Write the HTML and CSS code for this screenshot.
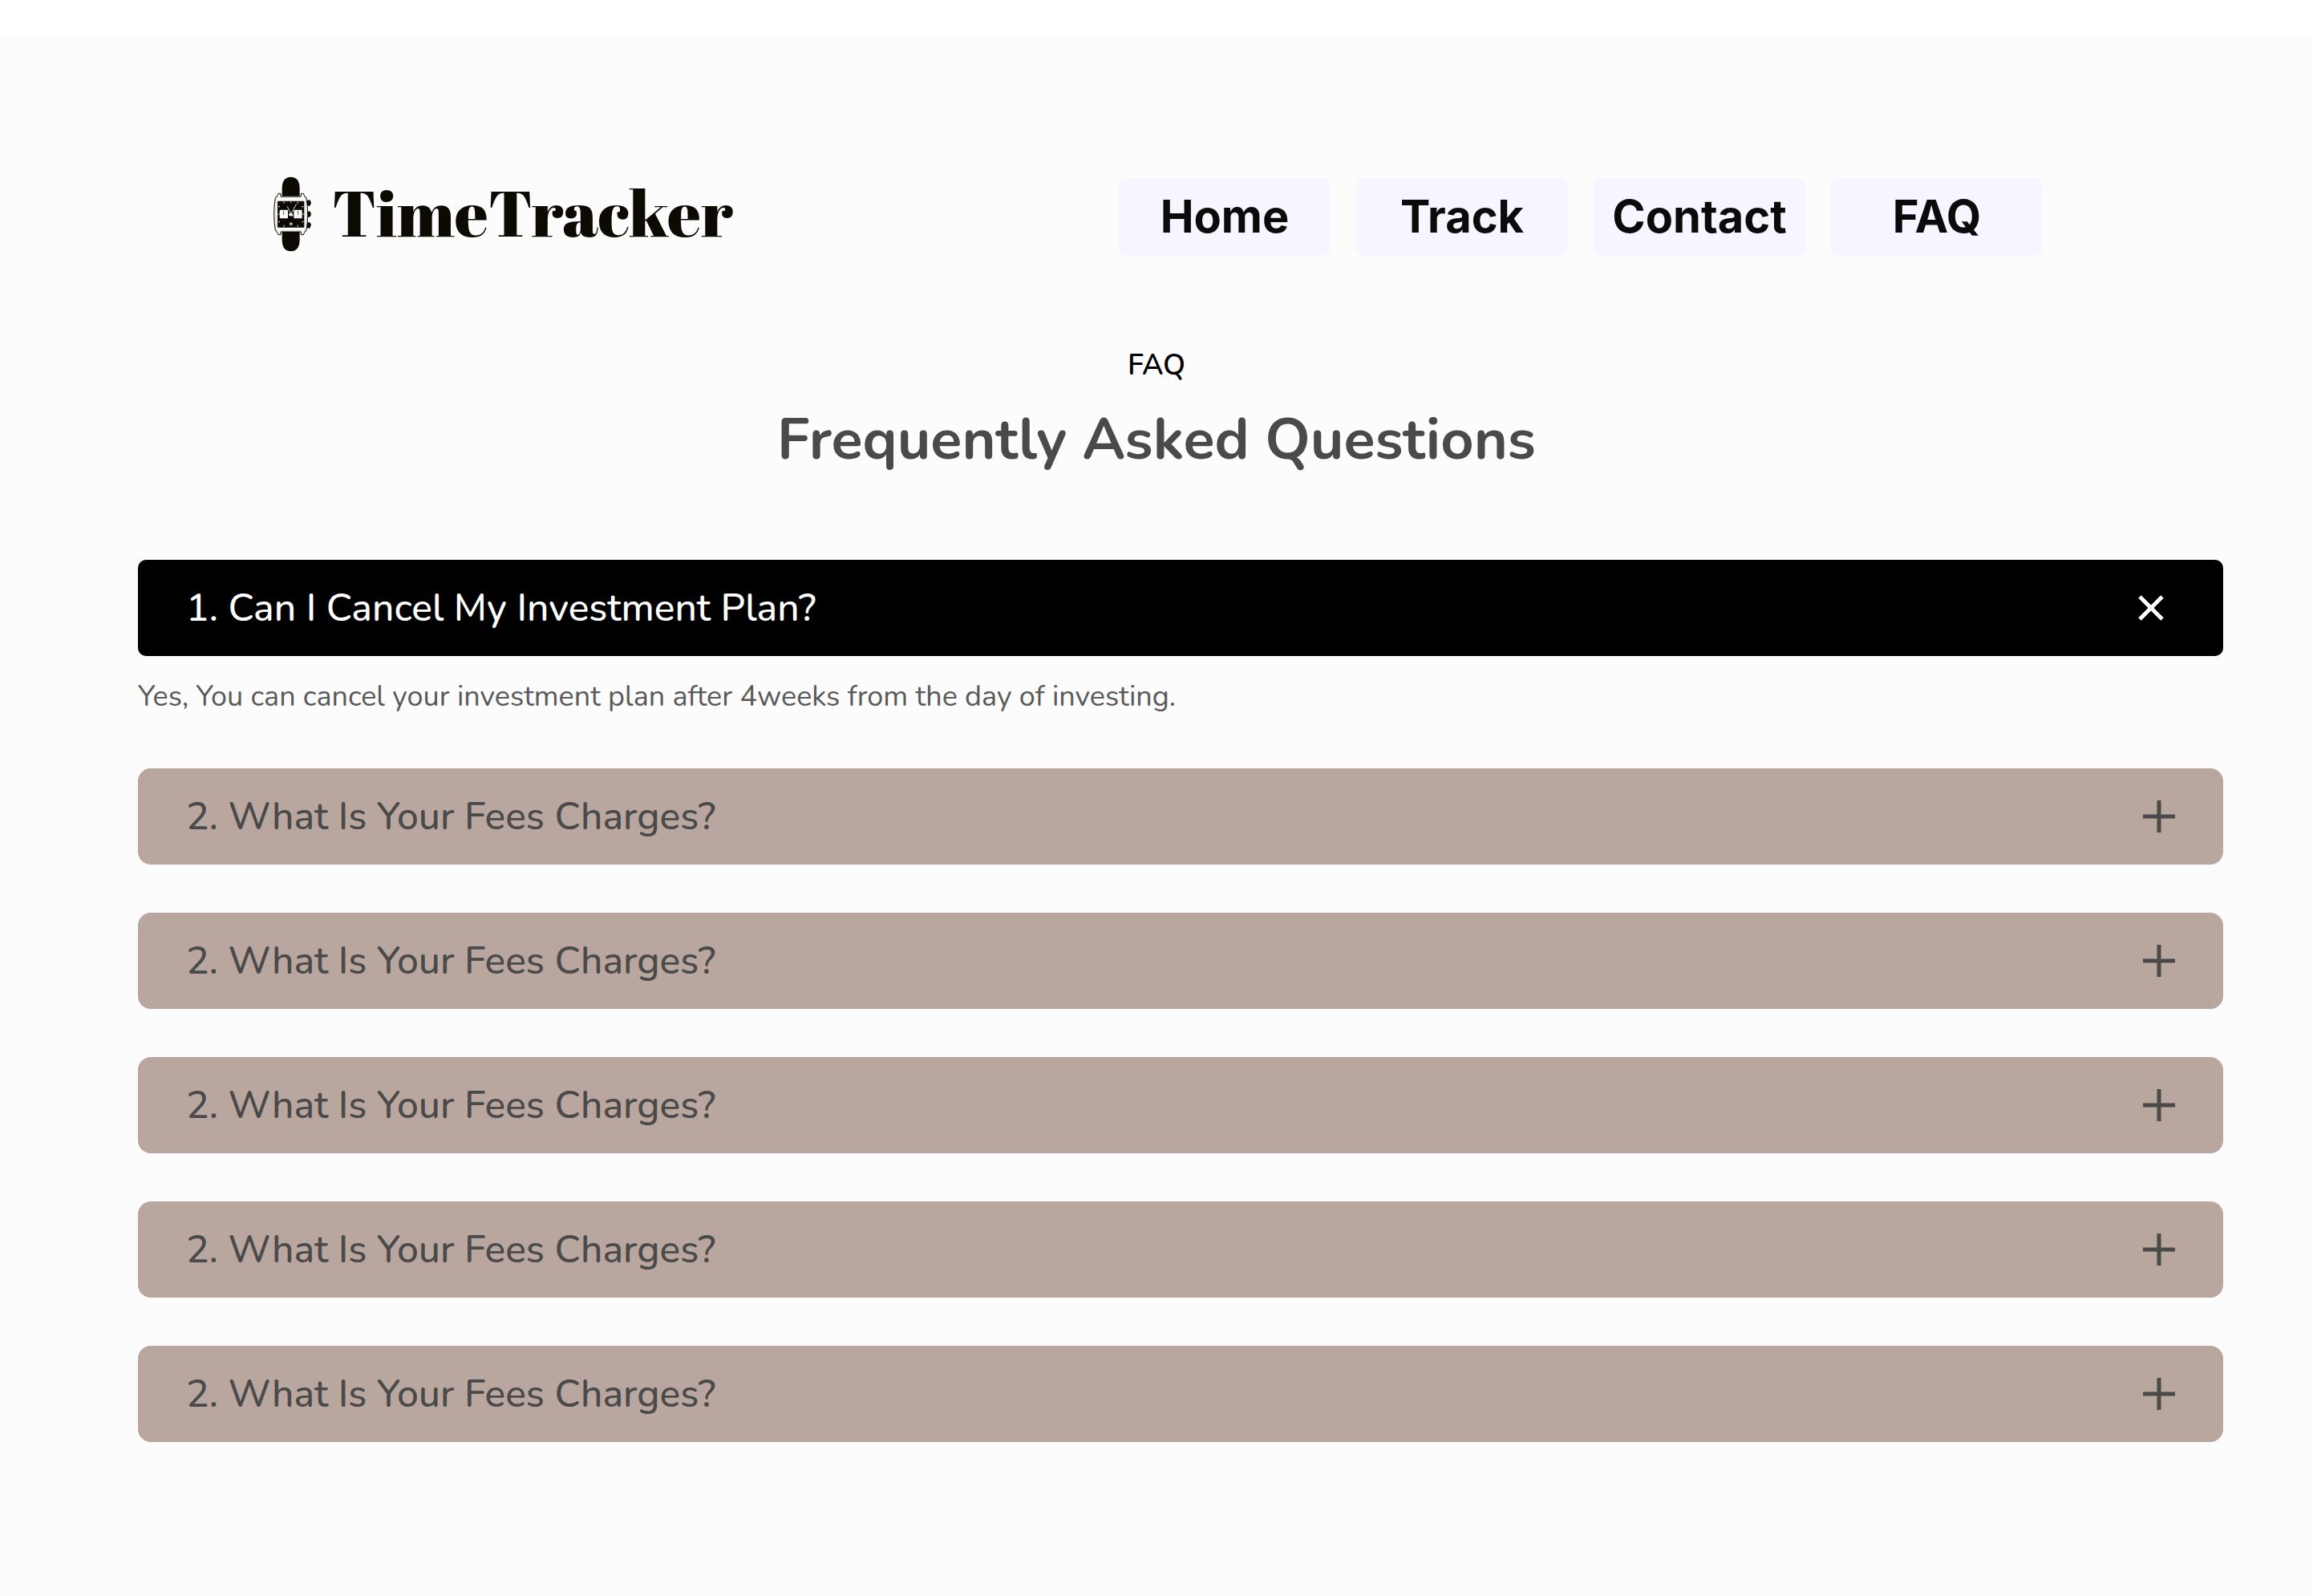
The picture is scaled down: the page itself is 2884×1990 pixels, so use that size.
FILE: index.html
```html
<!DOCTYPE html>
<html lang="en">
<head>
  <meta charset="utf-8">
  <meta name="viewport" content="width=device-width, initial-scale=1">
  <title>TimeTracker – FAQ</title>
  <link rel="stylesheet" href="styles.css">
</head>
<body>
  <div class="page">
    <header class="header">
      <a class="logo" href="#">
        <svg class="logo-mark" viewBox="60 66 150 288" aria-hidden="true">
          <path d="M95 134V104Q96 62 128 62T161 104V134Z" fill="#0c0a03"/>
          <path d="M95 267V298Q96 340 128 340T161 298V267Z" fill="#0c0a03"/>
          <path d="M188 150L200 148L204 160L199 170H188ZM188 192L198 190L203 196V206L198 212H188ZM188 232H199L204 240L199 254L188 252Z" fill="#0c0a03"/>
          <path d="M81 124H90V135H166V124H175L180 136L186 139Q196 201 186 263L180 266L175 278H166V267H90V278H81L76 266L70 263Q60 201 70 139L76 136Z" fill="#fcfcfc" stroke="#0c0a03" stroke-width="3"/>
          <path d="M76 136Q66 201 76 266M180 136Q190 201 180 266M90 139H166M90 263H166" fill="none" stroke="#888" stroke-width="1"/>
          <rect x="78" y="152" width="100" height="99" rx="3" fill="#0c0a03"/>
          <path d="M102 155V161M154 155V161M128 155V159M102 242V248M154 242V248M81 173H87M169 173H175M81 230H87M169 230H175M80 201H85M171 201H176" stroke="#fcfcfc" stroke-width="3"/>
          <rect x="86" y="185" width="31" height="32" rx="3" fill="#fcfcfc"/>
          <rect x="139" y="185" width="31" height="32" rx="3" fill="#fcfcfc"/>
          <path d="M101 189V204M155 189V204" stroke="#555" stroke-width="3"/>
          <path d="M128 201L149 163M128 201L115 172" fill="none" stroke="#ddd" stroke-width="3"/>
          <path d="M128 201L164 216" stroke="#aaa" stroke-width="1"/>
          <path d="M119 204L125 196L136 202L134 209L123 207Z" fill="#fcfcfc"/>
          <path d="M123 233H134V242H123Z" fill="#bbb"/>
        </svg>
        <span class="logo-name">TimeTracker</span>
      </a>
      <nav class="nav">
        <a class="nav-link" href="#">Home</a>
        <a class="nav-link" href="#">Track</a>
        <a class="nav-link" href="#">Contact</a>
        <a class="nav-link" href="#">FAQ</a>
      </nav>
    </header>

    <main>
      <div class="intro">
        <p class="eyebrow">FAQ</p>
        <h1 class="title">Frequently Asked Questions</h1>
      </div>

      <div class="faq">
        <section class="item">
          <button class="question question-open" type="button" aria-expanded="true" aria-controls="answer-1">
            <span>1. Can I Cancel My Investment Plan?</span>
            <svg class="icon" viewBox="0 0 60 40" aria-hidden="true"><path d="M16 6L44 34M44 6L16 34" stroke="currentColor" stroke-width="5"/></svg>
          </button>
          <p class="answer" id="answer-1">Yes, You can cancel your investment plan after 4weeks from the day of investing.</p>
        </section>
        <button class="question" type="button" aria-expanded="false">
          <span>2. What Is Your Fees Charges?</span>
          <svg class="icon" viewBox="0 0 60 40" aria-hidden="true"><path d="M40 0V40M20 20H60" stroke="currentColor" stroke-width="5"/></svg>
        </button>
        <button class="question" type="button" aria-expanded="false">
          <span>2. What Is Your Fees Charges?</span>
          <svg class="icon" viewBox="0 0 60 40" aria-hidden="true"><path d="M40 0V40M20 20H60" stroke="currentColor" stroke-width="5"/></svg>
        </button>
        <button class="question" type="button" aria-expanded="false">
          <span>2. What Is Your Fees Charges?</span>
          <svg class="icon" viewBox="0 0 60 40" aria-hidden="true"><path d="M40 0V40M20 20H60" stroke="currentColor" stroke-width="5"/></svg>
        </button>
        <button class="question" type="button" aria-expanded="false">
          <span>2. What Is Your Fees Charges?</span>
          <svg class="icon" viewBox="0 0 60 40" aria-hidden="true"><path d="M40 0V40M20 20H60" stroke="currentColor" stroke-width="5"/></svg>
        </button>
        <button class="question" type="button" aria-expanded="false">
          <span>2. What Is Your Fees Charges?</span>
          <svg class="icon" viewBox="0 0 60 40" aria-hidden="true"><path d="M40 0V40M20 20H60" stroke="currentColor" stroke-width="5"/></svg>
        </button>
      </div>
    </main>
  </div>
</body>
</html>
```

FILE: styles.css
```css
* {
  box-sizing: border-box;
}

html {
  background: #ffffff;
}

body {
  margin: 0;
  padding-top: 46px;
  min-height: 100vh;
  display: flex;
  flex-direction: column;
  font-family: Nunito, Lato, sans-serif;
  color: #4a4a4a;
}

p,
h1 {
  margin: 0;
}

.page {
  flex: 1;
  padding: 176px 0 100px;
  background: #fcfcfc;
}

.header {
  display: flex;
  align-items: center;
  justify-content: space-between;
  padding: 0 337px 0 340px;
}

.logo {
  display: flex;
  align-items: flex-start;
  gap: 24px;
  color: #0c0a03;
  text-decoration: none;
}

.logo-mark {
  width: 50px;
  height: 96px;
  overflow: visible;
}

.logo-name {
  font-family: "Abril Fatface", "Liberation Serif", serif;
  font-size: 81px;
  font-weight: 400;
  line-height: 84px;
}

.nav {
  display: flex;
  gap: 32px;
}

.nav-link {
  width: 264px;
  border-radius: 8px;
  background: #f7f5ff;
  color: #0b0b0b;
  font-family: Inter, sans-serif;
  font-size: 56px;
  font-weight: 700;
  line-height: 96px;
  text-align: center;
  text-decoration: none;
}

.intro {
  display: flex;
  flex-direction: column;
  gap: 18px;
  padding: 114px 0 100px;
  text-align: center;
}

.eyebrow {
  color: #000000;
  font-size: 36px;
  font-weight: 600;
  line-height: 48px;
}

.title {
  font-size: 72px;
  font-weight: 700;
  line-height: 100px;
}

.faq {
  display: flex;
  flex-direction: column;
  gap: 60px;
  padding: 0 112px 0 172px;
}

.question {
  display: flex;
  align-items: center;
  justify-content: space-between;
  width: 100%;
  height: 120px;
  padding: 0 60px;
  border: 0;
  border-radius: 16px;
  background: #b9a69e;
  color: #4a4a4a;
  font-family: inherit;
  font-size: 48px;
  font-weight: 500;
  text-align: left;
}

.question-open {
  border-radius: 10px;
  background: #000000;
  color: #ffffff;
}

.icon {
  width: 60px;
  height: 40px;
}

.answer {
  padding: 27px 0 5px;
  color: #5a5a5a;
  font-size: 36px;
  line-height: 48px;
}
```
